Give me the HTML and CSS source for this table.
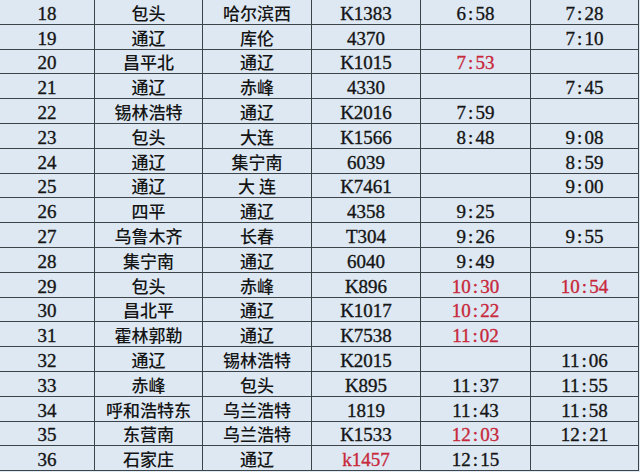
FILE: index.html
```html
<!DOCTYPE html>
<html lang="zh">
<head>
<meta charset="utf-8">
<title>列车时刻表</title>
<link rel="stylesheet" href="styles.css">
</head>
<body>
<div class="table">
  <div class="row"><div class="cell num">18</div><div class="cell zh">包头</div><div class="cell zh">哈尔滨西</div><div class="cell num">K1383</div><div class="cell num">6<span class="c">:</span>58</div><div class="cell num">7<span class="c">:</span>28</div></div>
  <div class="row"><div class="cell num">19</div><div class="cell zh">通辽</div><div class="cell zh">库伦</div><div class="cell num">4370</div><div class="cell num"></div><div class="cell num">7<span class="c">:</span>10</div></div>
  <div class="row"><div class="cell num">20</div><div class="cell zh">昌平北</div><div class="cell zh">通辽</div><div class="cell num">K1015</div><div class="cell num red">7<span class="c">:</span>53</div><div class="cell num"></div></div>
  <div class="row"><div class="cell num">21</div><div class="cell zh">通辽</div><div class="cell zh">赤峰</div><div class="cell num">4330</div><div class="cell num"></div><div class="cell num">7<span class="c">:</span>45</div></div>
  <div class="row"><div class="cell num">22</div><div class="cell zh">锡林浩特</div><div class="cell zh">通辽</div><div class="cell num">K2016</div><div class="cell num">7<span class="c">:</span>59</div><div class="cell num"></div></div>
  <div class="row"><div class="cell num">23</div><div class="cell zh">包头</div><div class="cell zh">大连</div><div class="cell num">K1566</div><div class="cell num">8<span class="c">:</span>48</div><div class="cell num">9<span class="c">:</span>08</div></div>
  <div class="row"><div class="cell num">24</div><div class="cell zh">通辽</div><div class="cell zh">集宁南</div><div class="cell num">6039</div><div class="cell num"></div><div class="cell num">8<span class="c">:</span>59</div></div>
  <div class="row"><div class="cell num">25</div><div class="cell zh">通辽</div><div class="cell zh">大&nbsp;连</div><div class="cell num">K7461</div><div class="cell num"></div><div class="cell num">9<span class="c">:</span>00</div></div>
  <div class="row"><div class="cell num">26</div><div class="cell zh">四平</div><div class="cell zh">通辽</div><div class="cell num">4358</div><div class="cell num">9<span class="c">:</span>25</div><div class="cell num"></div></div>
  <div class="row"><div class="cell num">27</div><div class="cell zh">乌鲁木齐</div><div class="cell zh">长春</div><div class="cell num">T304</div><div class="cell num">9<span class="c">:</span>26</div><div class="cell num">9<span class="c">:</span>55</div></div>
  <div class="row"><div class="cell num">28</div><div class="cell zh">集宁南</div><div class="cell zh">通辽</div><div class="cell num">6040</div><div class="cell num">9<span class="c">:</span>49</div><div class="cell num"></div></div>
  <div class="row"><div class="cell num">29</div><div class="cell zh">包头</div><div class="cell zh">赤峰</div><div class="cell num">K896</div><div class="cell num red">10<span class="c">:</span>30</div><div class="cell num red">10<span class="c">:</span>54</div></div>
  <div class="row"><div class="cell num">30</div><div class="cell zh">昌北平</div><div class="cell zh">通辽</div><div class="cell num">K1017</div><div class="cell num red">10<span class="c">:</span>22</div><div class="cell num"></div></div>
  <div class="row"><div class="cell num">31</div><div class="cell zh">霍林郭勒</div><div class="cell zh">通辽</div><div class="cell num">K7538</div><div class="cell num red">11<span class="c">:</span>02</div><div class="cell num"></div></div>
  <div class="row"><div class="cell num">32</div><div class="cell zh">通辽</div><div class="cell zh">锡林浩特</div><div class="cell num">K2015</div><div class="cell num"></div><div class="cell num">11<span class="c">:</span>06</div></div>
  <div class="row"><div class="cell num">33</div><div class="cell zh">赤峰</div><div class="cell zh">包头</div><div class="cell num">K895</div><div class="cell num">11<span class="c">:</span>37</div><div class="cell num">11<span class="c">:</span>55</div></div>
  <div class="row"><div class="cell num">34</div><div class="cell zh">呼和浩特东</div><div class="cell zh">乌兰浩特</div><div class="cell num">1819</div><div class="cell num">11<span class="c">:</span>43</div><div class="cell num">11<span class="c">:</span>58</div></div>
  <div class="row"><div class="cell num">35</div><div class="cell zh">东营南</div><div class="cell zh">乌兰浩特</div><div class="cell num">K1533</div><div class="cell num red">12<span class="c">:</span>03</div><div class="cell num">12<span class="c">:</span>21</div></div>
  <div class="row"><div class="cell num">36</div><div class="cell zh">石家庄</div><div class="cell zh">通辽</div><div class="cell num red">k1457</div><div class="cell num">12<span class="c">:</span>15</div><div class="cell num"></div></div>
</div>
</body>
</html>
```
FILE: styles.css
```css
html, body {
  margin: 0;
  padding: 0;
  background: #dde8f3;
}
body {
  width: 640px;
  height: 472px;
  overflow: hidden;
}
.table {
  display: grid;
  grid-auto-rows: 24.8px;
  width: 640px;
  background: #dde8f3;
}
.row {
  display: grid;
  grid-template-columns: 95px 108px 109px 109px 110px 108px;
}
.cell {
  box-sizing: border-box;
  border-right: 1px solid #3d4449;
  border-bottom: 1px solid #3d4449;
  display: flex;
  align-items: center;
  justify-content: center;
  padding-top: 3px;
  color: #151515;
  white-space: nowrap;
  line-height: 1;
}
.num {
  font-family: "Liberation Serif", "Noto Sans CJK SC", serif;
  font-size: 19px;
  -webkit-text-stroke: 0.35px currentColor;
}
.zh {
  font-family: "Noto Sans CJK SC", sans-serif;
  font-size: 17px;
  font-weight: 500;
  padding-top: 1px;
}
.c {
  margin: 0 2px;
}
.red {
  color: #c8283c;
}
```
